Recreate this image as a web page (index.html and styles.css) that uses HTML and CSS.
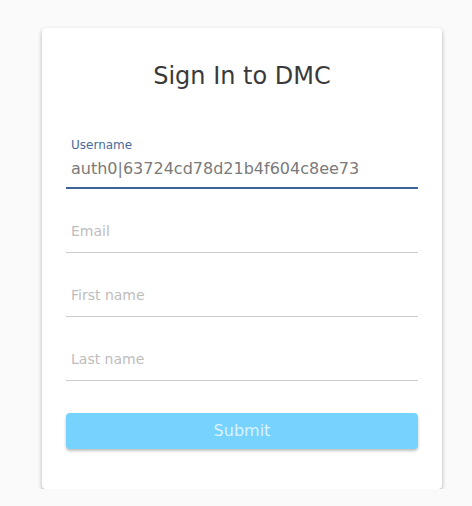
FILE: index.html
```html
<!DOCTYPE html>
<html>
    <head>
        <title>Sign In to DMC</title>
        <link rel="stylesheet" href="styles.css">
    </head>
    <body>
        <div class="card">
            <h1 class="title">Sign In to DMC</h1>
            <div class="field focused">
                <div class="label">Username</div>
                <div class="value">auth0|63724cd78d21b4f604c8ee73</div>
            </div>
            <div class="field">
                <div class="placeholder">Email</div>
            </div>
            <div class="field">
                <div class="placeholder">First name</div>
            </div>
            <div class="field">
                <div class="placeholder">Last name</div>
            </div>
            <button class="submit">Submit</button>
        </div>
    </body>
</html>
```

FILE: styles.css
```css
body {
    background-color: #fafafa;
    font-family: "DejaVu Sans", sans-serif;
    margin: 0px;
    padding-top: 28px;
    padding-left: 42px;
}
.card {
    width: 400px;
    box-sizing: border-box;
    background-color: white;
    border-radius: 4px;
    box-shadow: 0px 2px 4px rgba(0, 0, 0, 0.3);
    padding: 24px 24px 40px 24px;
}
.title {
    font-size: 24px;
    font-weight: normal;
    line-height: 32px;
    color: #3a3a3a;
    text-align: center;
    margin: 8px 0px 33px 0px;
}
.field {
    height: 64px;
    box-sizing: border-box;
    padding: 30px 0px 9px 5px;
    border-bottom: 1px solid #cccccc;
}
.field.focused {
    padding: 12px 0px 6px 5px;
    border-bottom: 2px solid #40639a;
}
.label {
    font-size: 12px;
    line-height: 16px;
    color: #4a6a9c;
    margin-bottom: 4px;
}
.value {
    font-size: 16px;
    line-height: 24px;
    color: #7a7a7a;
}
.placeholder {
    font-size: 14px;
    line-height: 24px;
    color: #bdbdbd;
}
.submit {
    display: block;
    width: 100%;
    height: 36px;
    margin-top: 32px;
    padding-bottom: 2px;
    border: none;
    border-radius: 4px;
    background-color: #75d3fe;
    color: rgba(255, 255, 255, 0.75);
    font-family: "DejaVu Sans", sans-serif;
    font-size: 16px;
    box-shadow: 0px 2px 3px rgba(0, 0, 0, 0.25);
}
```
